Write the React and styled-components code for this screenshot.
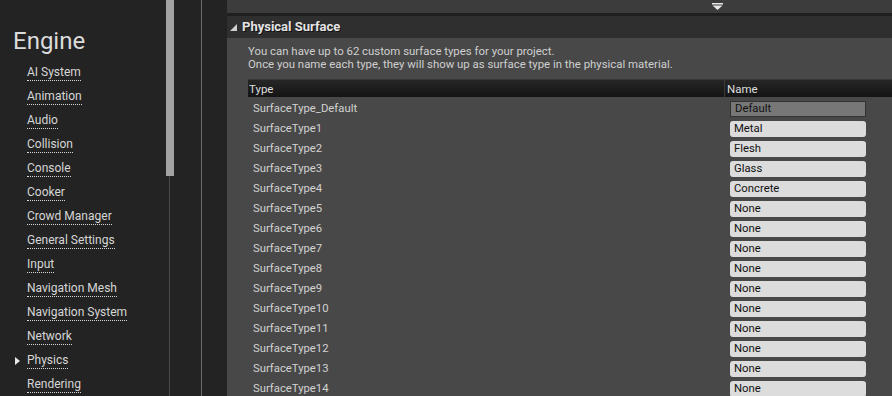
import React from "react";
import styled, { createGlobalStyle } from "styled-components";

const navItems = [
  "AI System",
  "Animation",
  "Audio",
  "Collision",
  "Console",
  "Cooker",
  "Crowd Manager",
  "General Settings",
  "Input",
  "Navigation Mesh",
  "Navigation System",
  "Network",
  "Physics",
  "Rendering",
];

const surfaces = [
  "Default",
  "Metal",
  "Flesh",
  "Glass",
  "Concrete",
  "None",
  "None",
  "None",
  "None",
  "None",
  "None",
  "None",
  "None",
  "None",
  "None",
];

export default function App() {
  return (
    <>
      <GlobalStyle />
      <Screen>
        <Sidebar>
          <Title>Engine</Title>
          <NavList>
            {navItems.map((item) => (
              <NavItem key={item}>
                <Marker $on={item === "Physics"} />
                <NavLink>{item}</NavLink>
              </NavItem>
            ))}
          </NavList>
        </Sidebar>
        <ScrollTrack>
          <Thumb />
        </ScrollTrack>
        <Gutter />
        <Divider />
        <Gutter $w={25} />
        <Panel>
          <TopBar>
            <svg width="11" height="7" viewBox="0 0 11 7">
              <rect x="0" y="0" width="11" height="1.5" fill="#e8e8e8" />
              <polygon points="0.5,2.5 10.5,2.5 5.5,7" fill="#e8e8e8" />
            </svg>
          </TopBar>
          <Category>
            <svg width="7" height="7" viewBox="0 0 7 7">
              <polygon points="7,0 7,7 0,7" fill="#cfcfcf" />
            </svg>
            <CategoryName>Physical Surface</CategoryName>
          </Category>
          <Content>
            <Description>
              You can have up to 62 custom surface types for your project.
              <br />
              Once you name each type, they will show up as surface type in the physical material.
            </Description>
            <Table>
              <HeadCell>Type</HeadCell>
              <HeadCell $divider>Name</HeadCell>
              {surfaces.map((name, i) => (
                <React.Fragment key={i}>
                  <TypeCell>
                    {i === 0 ? "SurfaceType_Default" : `SurfaceType${i}`}
                  </TypeCell>
                  <NameCell>
                    <NameInput $locked={i === 0}>{name}</NameInput>
                  </NameCell>
                </React.Fragment>
              ))}
            </Table>
          </Content>
        </Panel>
      </Screen>
    </>
  );
}

const GlobalStyle = createGlobalStyle`
  html, body {
    margin: 0;
    padding: 0;
    background: #232323;
    overflow: hidden;
  }
  body {
    font-family: Roboto, "Liberation Sans", sans-serif;
  }
`;

const Screen = styled.div`
  display: flex;
  flex-direction: row;
  width: 892px;
  height: 396px;
  overflow: hidden;
  background: #232323;
`;

const Sidebar = styled.nav`
  width: 166px;
  flex-shrink: 0;
  display: flex;
  flex-direction: column;
`;

const Title = styled.h1`
  margin: 26px 0 0 13px;
  font-size: 24px;
  font-weight: 400;
  line-height: 30px;
  color: #dcdcdc;
`;

const NavList = styled.ul`
  list-style: none;
  margin: 0;
  padding: 0;
  margin-top: 5px;
`;

const NavItem = styled.li`
  display: flex;
  align-items: center;
  height: 24px;
  padding-left: 15px;
`;

const Marker = styled.span`
  width: 0;
  height: 0;
  border-top: 4px solid transparent;
  border-bottom: 4px solid transparent;
  border-left: 5px solid ${(p) => (p.$on ? "#e8e8e8" : "transparent")};
  margin-right: 7px;
`;

const NavLink = styled.span`
  font-size: 12px;
  color: #d6d6d6;
  line-height: 14px;
  border-bottom: 1px dotted #d6d6d6;
  padding-bottom: 1px;
`;

const ScrollTrack = styled.div`
  width: 8px;
  flex-shrink: 0;
  background: linear-gradient(to right, transparent 3px, #4a4a4a 3px, #4a4a4a 4px, transparent 4px);
`;

const Thumb = styled.div`
  width: 8px;
  height: 176px;
  background: #a3a3a3;
`;

const Gutter = styled.div`
  width: ${(p) => p.$w || 27}px;
  flex-shrink: 0;
`;

const Divider = styled.div`
  width: 1px;
  flex-shrink: 0;
  background: #6a6a6a;
`;

const Panel = styled.main`
  flex: 1;
  display: flex;
  flex-direction: column;
  min-width: 0;
  overflow: hidden;
  background: #484848;
`;

const TopBar = styled.div`
  flex-shrink: 0;
  height: 13px;
  background: #3c3c3c;
  border-bottom: 3px solid #1f1f1f;
  display: flex;
  align-items: center;
  padding-left: 485px;
  svg {
    margin-top: -1px;
  }
`;

const Category = styled.div`
  flex-shrink: 0;
  height: 22px;
  box-sizing: border-box;
  padding: 0 0 1px 3px;
  background: #2f2f2f;
  display: flex;
  align-items: center;
  gap: 5px;
  svg {
    margin-top: 1px;
  }
`;

const CategoryName = styled.span`
  font-size: 13px;
  font-weight: 700;
  color: #e4e4e4;
  text-shadow: 1px 1px 0 #111;
`;

const Content = styled.section`
  flex-shrink: 0;
  padding: 7px 0 0 21px;
`;

const Description = styled.p`
  margin: 0;
  font-size: 11.4px;
  line-height: 13px;
  color: #cfcfcf;
`;

const Table = styled.div`
  display: grid;
  grid-template-columns: 476px 1fr;
  grid-auto-rows: 20px;
  margin-top: 8px;
`;

const HeadCell = styled.div`
  height: 18px;
  display: flex;
  align-items: center;
  padding-left: ${(p) => (p.$divider ? "2px" : "1px")};
  font-size: 11.5px;
  color: #dedede;
  background: linear-gradient(#262626, #141414);
  border-top: 1px solid #363636;
  box-sizing: border-box;
  border-left: ${(p) => (p.$divider ? "1px solid #3a3a3a" : "none")};
`;

const TypeCell = styled.div`
  display: flex;
  align-items: center;
  padding: 0 0 1px 5px;
  font-size: 11.3px;
  color: #d2d2d2;
`;

const NameCell = styled.div`
  display: flex;
  align-items: center;
  padding: 0 0 1px 6px;
`;

const NameInput = styled.div`
  width: 136px;
  height: 16px;
  box-sizing: border-box;
  display: flex;
  align-items: center;
  padding-left: 4px;
  font-size: 11.3px;
  color: #111;
  background: ${(p) => (p.$locked ? "#777777" : "#dcdcdc")};
  border: ${(p) => (p.$locked ? "1px solid #333" : "none")};
  border-radius: ${(p) => (p.$locked ? "0" : "3px")};
`;
